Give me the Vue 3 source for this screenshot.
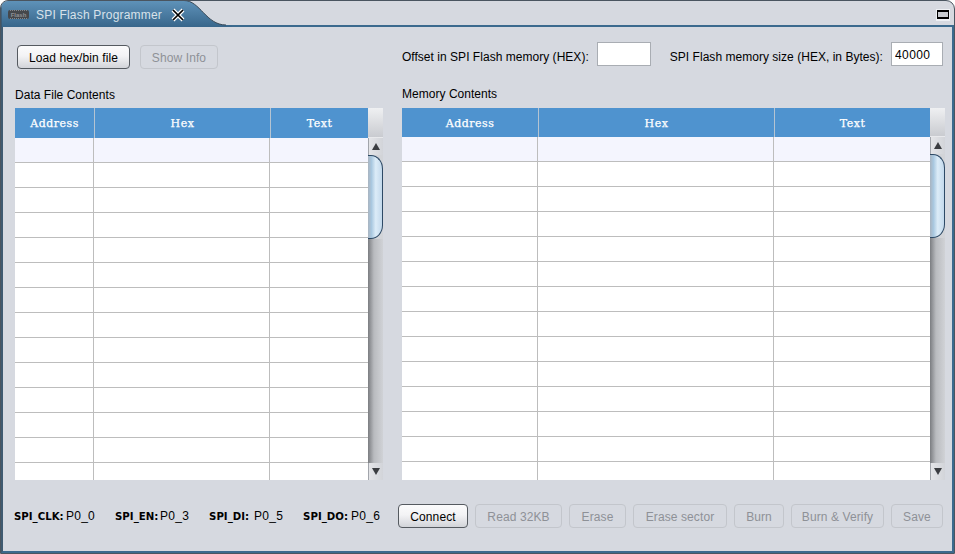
<script setup>
const rows = Array.from({ length: 14 }, (_, i) => i)
const actions = [
  { label: 'Connect', width: 70, on: true },
  { label: 'Read 32KB', width: 87 },
  { label: 'Erase', width: 57 },
  { label: 'Erase sector', width: 94 },
  { label: 'Burn', width: 50 },
  { label: 'Burn & Verify', width: 93 },
  { label: 'Save', width: 52 }
]
const pins = [
  { k: 'SPI_CLK:', v: 'P0_0', w: 52 },
  { k: 'SPI_EN:', v: 'P0_3', w: 45 },
  { k: 'SPI_DI:', v: 'P0_5', w: 45 },
  { k: 'SPI_DO:', v: 'P0_6', w: 48 }
]
const panels = [
  { id: 'left', title: 'Data File Contents' },
  { id: 'right', title: 'Memory Contents' }
]
</script>

<template>
  <div class="win">
    <div class="tabbar">
      <svg class="tabshape" width="232" height="27" viewBox="0 0 232 27">
        <defs>
          <linearGradient id="tabg" x1="0" y1="0" x2="0" y2="1">
            <stop offset="0" stop-color="#5f93ba" />
            <stop offset="1" stop-color="#38668b" />
          </linearGradient>
        </defs>
        <path d="M1 27 V7 Q1 0.5 8 0.5 H184 C200 0.5 206 25 226 25 H232 V27 Z" fill="url(#tabg)" />
        <path d="M1 27 V7 Q1 0.5 8 0.5 H184 C200 0.5 206 25 226 25" fill="none" stroke="#3a4a58" stroke-width="1" />
      </svg>
      <svg class="chip" width="21" height="9" viewBox="0 0 21 9">
        <rect x="0" y="0" width="21" height="9" rx="2" fill="#45484c" />
        <path d="M2 0.5 H19 M2 8.5 H19" stroke="#85888c" stroke-width="1" stroke-dasharray="1 1" />
        <text x="10.5" y="6.6" text-anchor="middle" class="chiptext">Flash</text>
      </svg>
      <span class="tabtitle">SPI Flash Programmer</span>
      <svg class="tabclose" width="14" height="14" viewBox="0 0 14 14">
        <path d="M2 2 L12 12 M12 2 L2 12" stroke="#ffffff" stroke-width="4" />
        <path d="M2 2 L12 12 M12 2 L2 12" stroke="#000000" stroke-width="1.7" />
      </svg>
      <span class="maxbtn"><i></i></span>
    </div>

    <div class="body">
      <div class="toolbar">
        <button class="btn on load">Load hex/bin file</button>
        <button class="btn info">Show Info</button>
        <div class="fields">
          <label class="lbl">Offset in SPI Flash memory (HEX):</label>
          <input class="field f1" value="" />
          <label class="lbl l2">SPI Flash memory size (HEX, in Bytes):</label>
          <input class="field f2" value="40000" />
        </div>
      </div>

      <div class="panels">
        <section v-for="p in panels" :key="p.id" class="panel" :class="p.id">
          <h3>{{ p.title }}</h3>
          <div class="table">
            <div class="grid">
              <div class="head">
                <span class="c1">Address</span><span class="c2">Hex</span><span class="c3">Text</span>
              </div>
              <div v-for="r in rows" :key="r" class="row" :class="{ sel: r === 0 }">
                <span class="c1"></span><span class="c2"></span><span class="c3"></span>
              </div>
            </div>
            <div class="sb">
              <div class="corner"></div>
              <div class="arrow up"><b></b></div>
              <div class="thumb"></div>
              <div class="track"></div>
              <div class="arrow down"><b></b></div>
            </div>
          </div>
        </section>
      </div>

      <div class="footer">
        <div class="pins">
          <span v-for="p in pins" :key="p.k" class="pin"><b :style="{ width: p.w + 'px' }">{{ p.k }}</b>{{ p.v }}</span>
        </div>
        <div class="actions">
          <button
            v-for="a in actions"
            :key="a.label"
            class="btn"
            :class="{ on: a.on }"
            :style="{ width: a.width + 'px' }"
          >{{ a.label }}</button>
        </div>
      </div>
    </div>
  </div>
</template>

<style>
html, body { margin: 0; padding: 0; background: #fff; }
</style>

<style scoped>
.win {
  width: 955px;
  height: 554px;
  box-sizing: border-box;
  display: flex;
  flex-direction: column;
  background: #d6d9e0;
  border: 1px solid #4a5560;
  border-radius: 8px 9px 0 0;
  font-family: "Liberation Sans", Arial, sans-serif;
  font-size: 12px;
  color: #000;
  overflow: hidden;
}
.tabbar {
  height: 24px;
  flex: none;
  position: relative;
  display: flex;
  align-items: center;
  box-sizing: border-box;
}
.tabshape { position: absolute; left: -1px; top: -1px; }
.chip { position: relative; margin-left: 7px; margin-top: 3px; }
.chiptext { font: bold 6px "Liberation Sans", sans-serif; fill: #8f9296; }
.tabtitle {
  position: relative;
  margin-left: 7px;
  margin-top: 3px;
  color: #d8e2ea;
  font-size: 12px;
  letter-spacing: 0.2px;
}
.tabclose { position: relative; margin-left: 9px; margin-top: 3px; }
.maxbtn {
  position: absolute;
  right: 4px;
  top: 8px;
  width: 14px;
  height: 12px;
  background: #eef0f4;
  box-sizing: border-box;
  padding: 1px;
}
.maxbtn i {
  display: block;
  height: 9px;
  box-sizing: border-box;
  border: 1px solid #000;
  border-top-width: 2px;
  border-bottom-width: 2px;
  background: #c9cbd0;
}
.body {
  flex: 1;
  min-height: 0;
  box-sizing: border-box;
  border: 2px solid #3b6a8e;
  border-left-color: #3f5a70;
  padding: 0 9px 0 12px;
  display: flex;
  flex-direction: column;
}
.toolbar {
  height: 47px;
  margin-top: 15px;
  flex: none;
  display: flex;
  align-items: flex-start;
}
.btn {
  box-sizing: border-box;
  height: 24px;
  font-family: "Liberation Sans", Arial, sans-serif;
  font-size: 12px;
  letter-spacing: 0.1px;
  padding: 1px 0 0;
  border: 1px solid #c3c6cc;
  border-radius: 4px;
  background: #d6d9e0;
  color: #8e9197;
}
.btn.on {
  border-color: #555a60;
  color: #000;
  background: linear-gradient(#fbfbfc 0%, #f3f3f5 45%, #d2d4d9 100%);
}
.load { width: 113px; margin-top: 3px; margin-left: 2px; }
.info { width: 78px; margin-top: 3px; margin-left: 10px; }
.fields {
  margin-left: auto;
  display: flex;
  align-items: center;
}
.lbl { font-size: 12px; letter-spacing: 0.03px; padding-top: 5px; }
.l2 { margin-left: 19px; margin-right: 8px; }
.field {
  box-sizing: border-box;
  height: 24px;
  border: 1px solid #a9adb3;
  background: #fff;
  padding: 2px 0 0 3px;
  font-family: "Liberation Sans", Arial, sans-serif;
  font-size: 12px;
  letter-spacing: 0.4px;
  outline: none;
}
.f1 { width: 54px; margin-left: 8px; }
.f2 { width: 52px; }
.panels {
  flex: none;
  height: 391px;
  display: flex;
  gap: 19px;
}
.panel { display: flex; flex-direction: column; }
.panel h3 {
  margin: -1px 0 6px;
  font-size: 12px;
  font-weight: normal;
  height: 14px;
  line-height: 14px;
  letter-spacing: 0.03px;
}
.panel.right h3 { margin: -2px 0 7px; }
.panel.left { width: 368px; }
.panel.right { width: 543px; }
.table { display: flex; overflow: hidden; flex: 1; min-height: 0; }
.grid { flex: 1; min-width: 0; background: #fff; overflow: hidden; }
.head {
  display: flex;
  height: 30px;
  background: #4f93cf;
  color: #ffffff;
  font-family: "DejaVu Serif", serif;
  font-weight: normal;
  font-size: 11px;
  letter-spacing: 0.5px;
  -webkit-text-stroke: 0.25px #ffffff;
  line-height: 32px;
  text-align: center;
}
.right .head { height: 29px; line-height: 31px; }
.head span { display: block; box-sizing: border-box; border-right: 1px solid #b5c4d2; }
.head .c3 { border-right: 0; }
.row { display: flex; height: 25px; box-sizing: border-box; border-bottom: 1px solid #bdbdbd; }
.row.sel { background: #f4f5fe; }
.row span { display: block; box-sizing: border-box; border-right: 1px solid #bdbdbd; }
.row .c3 { border-right: 0; }
.left .c1 { width: 80px; }
.left .c2 { width: 176px; }
.left .c3 { width: 97px; }
.left .row .c1 { width: 79px; }
.left .row .c2 { width: 176px; }
.left .row .c3 { width: 98px; }
.right .c1 { width: 137px; }
.right .c2 { width: 236px; }
.right .c3 { width: 155px; }
.right .row .c1 { width: 136px; }
.right .row .c2 { width: 236px; }
.right .row .c3 { width: 156px; }
.sb {
  width: 15px;
  flex: none;
  display: flex;
  flex-direction: column;
  background: #d2d4d8;
}
.corner {
  height: 30px;
  flex: none;
  background: linear-gradient(#eff0f2, #c9cbd0);
  border-bottom: 1px solid #e8e9ec;
  box-sizing: border-box;
}
.right .corner { height: 29px; }
.arrow {
  height: 17px;
  flex: none;
  background: linear-gradient(90deg, #e4e5e8, #d2d4d9);
  border-left: 1px solid #a2a5ab;
  display: flex;
  align-items: center;
  justify-content: center;
  box-sizing: border-box;
}
.arrow b { width: 0; height: 0; border-left: 4px solid transparent; border-right: 4px solid transparent; }
.up b { border-bottom: 7px solid #3b3d41; }
.down b { border-top: 7px solid #3b3d41; }
.thumb {
  height: 84px;
  flex: none;
  box-sizing: border-box;
  border: 1px solid #2e4a66;
  border-left: 0;
  border-radius: 0 12px 12px 0 / 0 14px 14px 0;
  background: linear-gradient(90deg, #a9b4c0 0%, #a9c8e0 25%, #dcecf8 55%, #c3d9ec 100%);
}
.track {
  flex: 1;
  background: linear-gradient(90deg, #7b7d81 0%, #b9bbbf 40%, #d0d2d6 100%);
}
.footer {
  flex: 1;
  display: flex;
  align-items: center;
  justify-content: space-between;
  padding-top: 1px;
}
.pins { display: flex; gap: 20px; margin-left: -1px; }
.pin { display: flex; width: auto; font-size: 12px; letter-spacing: 0.25px; white-space: nowrap; align-items: baseline; }
.pin b { display: block; font-family: "DejaVu Sans", sans-serif; font-size: 10.2px; letter-spacing: 0; }
.actions { display: flex; gap: 7px; }
</style>
